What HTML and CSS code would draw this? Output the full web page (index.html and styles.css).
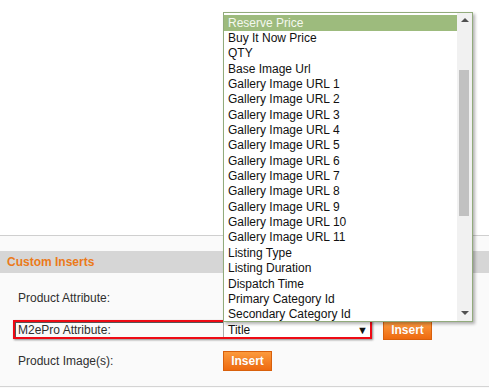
FILE: index.html
```html
<!DOCTYPE html>
<html>
<head>
<meta charset="utf-8">
<link rel="stylesheet" href="styles.css">
</head>
<body>
<div class="top"></div>
<div class="section">
  <div class="section-head">Custom Inserts</div>
  <div class="rows">
    <div class="row row1">
      <div class="label">Product Attribute:</div>
    </div>
    <div class="row row2">
      <div class="marked">
        <div class="label">M2ePro Attribute:</div>
        <div class="select"><span>Title</span><span class="caret">▼</span></div>
      </div>
      <button class="btn">Insert</button>
    </div>
    <div class="row row3">
      <div class="label">Product Image(s):</div>
      <button class="btn">Insert</button>
    </div>
  </div>
</div>

<div class="dropdown">
  <div class="list">
    <div class="opt sel">Reserve Price</div>
    <div class="opt">Buy It Now Price</div>
    <div class="opt">QTY</div>
    <div class="opt">Base Image Url</div>
    <div class="opt">Gallery Image URL 1</div>
    <div class="opt">Gallery Image URL 2</div>
    <div class="opt">Gallery Image URL 3</div>
    <div class="opt">Gallery Image URL 4</div>
    <div class="opt">Gallery Image URL 5</div>
    <div class="opt">Gallery Image URL 6</div>
    <div class="opt">Gallery Image URL 7</div>
    <div class="opt">Gallery Image URL 8</div>
    <div class="opt">Gallery Image URL 9</div>
    <div class="opt">Gallery Image URL 10</div>
    <div class="opt">Gallery Image URL 11</div>
    <div class="opt">Listing Type</div>
    <div class="opt">Listing Duration</div>
    <div class="opt">Dispatch Time</div>
    <div class="opt">Primary Category Id</div>
    <div class="opt">Secondary Category Id</div>
  </div>
  <div class="scrollbar">
    <div class="arrow up"></div>
    <div class="track"><div class="thumb"></div></div>
    <div class="arrow down"></div>
  </div>
</div>
</body>
</html>
```

FILE: styles.css
```css
html, body {
  margin: 0;
  padding: 0;
}
body {
  width: 489px;
  height: 388px;
  overflow: hidden;
  background: #fafafa;
  font-family: "Liberation Sans", Arial, sans-serif;
  font-size: 12px;
  color: #2f2f2f;
  position: relative;
}
.top {
  height: 235px;
  background: #fff;
  border-bottom: 1px solid #cfcfcf;
}
.section {
  padding-top: 15px;
  background: #fafafa;
  border-bottom: 1px solid #d4d4d4;
}
.section-head {
  height: 22px;
  line-height: 22px;
  background: #d6d6d6;
  color: #eb7a1a;
  font-weight: bold;
  padding-left: 7px;
}
.rows {
  display: flex;
  flex-direction: column;
  padding-bottom: 15px;
}
.row {
  display: flex;
  align-items: center;
  height: 20px;
}
.row1 { margin-top: 15px; padding-left: 18px; }
.row2 { margin-top: 12px; padding-left: 13px; }
.row3 { margin-top: 11px; padding-left: 18px; }
.label {
  width: 205px;
  flex: none;
}
.marked {
  display: flex;
  align-items: center;
  width: 352px;
  height: 15px;
  border: 2px solid #ee0a14;
  box-shadow: inset 1px 1px 0 #555, 1px 1px 2px rgba(0,0,0,0.45);
  padding-left: 3px;
  box-sizing: content-box;
  margin-top: -1px;
}
.select {
  flex: 1;
  height: 15px;
  background: #fff;
  border-left: 1px solid #aaa;
  display: flex;
  align-items: center;
  justify-content: space-between;
  padding: 0 2px 0 4px;
  font-size: 12px;
  color: #111;
}
.caret {
  font-size: 11px;
  color: #111;
  line-height: 12px;
}
.btn {
  width: 49px;
  height: 20px;
  padding: 0;
  border: 1px solid #d8600c;
  background: linear-gradient(#fc9a3d, #ee6a10);
  color: #fff;
  font-family: "Liberation Sans", Arial, sans-serif;
  font-weight: bold;
  font-size: 12px;
  line-height: 17px;
  text-shadow: 0 0 1px rgba(180,70,0,0.4);
  flex: none;
}
.row2 .btn { margin-left: 11px; height: 19px; }

.dropdown {
  position: absolute;
  left: 223px;
  top: 12px;
  width: 248px;
  height: 308px;
  border: 1px solid #92ab7c;
  background: #fff;
  box-shadow: 2px 2px 3px rgba(0,0,0,0.3);
  display: flex;
  overflow: hidden;
}
.list {
  flex: 1;
  padding-top: 2px;
  overflow: hidden;
  color: #111;
}
.opt {
  height: 15.35px;
  line-height: 15.35px;
  padding-left: 4px;
  white-space: nowrap;
}
.opt.sel {
  background: #9dbb7d;
  color: #f4f8ef;
  height: 16px;
  line-height: 16px;
}
.scrollbar {
  width: 15px;
  background: #f1f1f1;
  display: flex;
  flex-direction: column;
  align-items: center;
}
.arrow {
  height: 15px;
  width: 15px;
  position: relative;
  flex: none;
}
.arrow.up::after, .arrow.down::after {
  content: "";
  position: absolute;
  left: 4px;
  border-left: 4px solid transparent;
  border-right: 4px solid transparent;
}
.arrow.up::after {
  top: 5px;
  border-bottom: 4px solid #505050;
}
.arrow.down::after {
  top: 5px;
  border-top: 4px solid #505050;
}
.track {
  flex: 1;
  width: 15px;
  position: relative;
}
.thumb {
  position: absolute;
  left: 2px;
  width: 10px;
  top: 42px;
  height: 146px;
  background: #c1c1c1;
}
```
